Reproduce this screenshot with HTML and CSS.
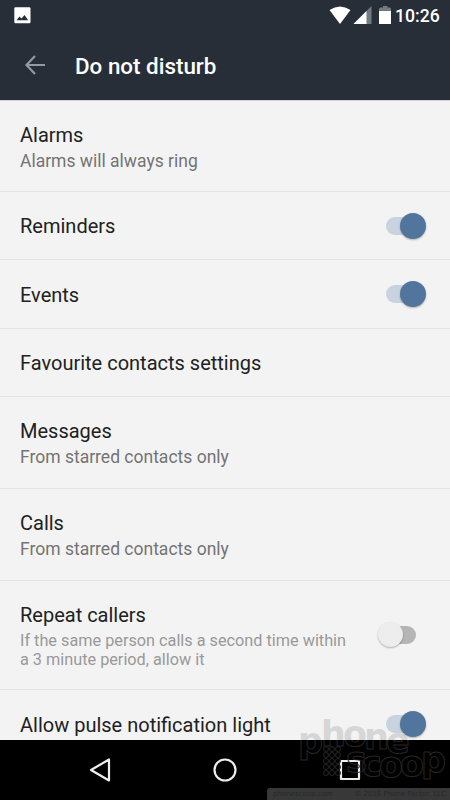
FILE: index.html
```html
<!DOCTYPE html>
<html lang="en">
<head>
<meta charset="utf-8">
<title>Do not disturb</title>
<link rel="stylesheet" href="styles.css">
</head>
<body>
<div class="screen">
  <header class="top">
    <div class="status">
      <svg class="photo" width="17" height="17" viewBox="0 0 17 17"><rect x=".3" y=".3" width="16.200" height="16" rx="1.200" fill="#fff"/><path d="M2.500 13.200 5.500 9.600 7.500 11.500 10.500 8 14.200 13.200Z" fill="#272e38"/></svg>
      <div class="status-right">
        <svg width="68" height="20" viewBox="0 0 68 20"><path d="M.5 5Q11 -2 21.500 5L11 19Z" fill="#fff"/><path d="M42.500 1V19H24.500Z" fill="#747a82"/><path d="M37.500 6V19H24.500Z" fill="#fff"/><path d="M50 4Q50 2.500 51.500 2.500H54V1H58.500V2.500H61Q62 2.500 62 4V7H50Z" fill="#747a82"/><path d="M50 6H62V19H50Z" fill="#fff"/></svg>
        <span class="clock">10:26</span>
      </div>
    </div>
    <div class="bar">
      <svg class="back" width="22" height="22" viewBox="0 0 22 22" fill="none" stroke="#9599a0" stroke-width="2.200"><path d="M21 11H3M11 2 2.500 11 11 20"/></svg>
      <h1>Do not disturb</h1>
    </div>
  </header>
  <main class="list">
    <div class="row tall"><div><div class="title">Alarms</div><div class="sub">Alarms will always ring</div></div></div>
    <div class="row"><div class="title">Reminders</div><span class="switch on"></span></div>
    <div class="row"><div class="title">Events</div><span class="switch on"></span></div>
    <div class="row"><div class="title">Favourite contacts settings</div></div>
    <div class="row tall"><div><div class="title">Messages</div><div class="sub">From starred contacts only</div></div></div>
    <div class="row tall"><div><div class="title">Calls</div><div class="sub">From starred contacts only</div></div></div>
    <div class="row repeat"><div><div class="title">Repeat callers</div><div class="note">If the same person calls a second time within<br>a 3 minute period, allow it</div></div><span class="switch off"></span></div>
    <div class="row last"><div class="title">Allow pulse notification light</div><span class="switch on"></span></div>
  </main>
  <nav class="nav">
    <svg width="450" height="60" viewBox="0 0 450 60" fill="none" stroke="#eee" stroke-width="2.200" stroke-linejoin="round"><path d="M91 30 109 19.500V40.500Z"/><circle cx="225" cy="30" r="10.500"/><rect x="341" y="21" width="18" height="18"/></svg>
  </nav>
  <svg class="mark" width="155" height="90" viewBox="0 0 155 90">
    <defs>
      <linearGradient id="fill" gradientUnits="userSpaceOnUse" x1="0" y1="0" x2="0" y2="60"><stop offset=".5" stop-color="#000" stop-opacity=".12"/><stop offset=".5" stop-color="#000" stop-opacity="0"/></linearGradient>
      <linearGradient id="line" gradientUnits="userSpaceOnUse" x1="0" y1="0" x2="0" y2="60"><stop offset=".5" stop-color="#000" stop-opacity="0"/><stop offset=".5" stop-color="#262626"/></linearGradient>
      <pattern id="dots" width="6" height="6" patternUnits="userSpaceOnUse" x="28" y="36"><circle cx="3" cy="3" r="2.500" fill="none" stroke="#242424"/></pattern>
    </defs>
    <rect x="28" y="36" width="18" height="30" fill="url(#dots)"/>
    <g class="brand" fill="url(#fill)" stroke="url(#line)"><text x="3 26 48 69 91" y="43 36 36 39 43">phone</text><text x="51 66 84 105 126" y="62 66 67 66 62">scoop</text></g>
  </svg>
  <div class="credit"><span>phonescoop.com</span><span>© 2016 Phone Factor, LLC</span></div>
</div>
</body>
</html>
```
FILE: styles.css
```css
* { box-sizing: border-box; }
body { margin: 0; font-family: Roboto, "Liberation Sans", sans-serif; }
.screen { position: relative; width: 450px; height: 800px; display: flex; flex-direction: column; overflow: hidden; background: #f3f3f3; }
.top { height: 100px; flex: none; background: #272e38; color: #fff; }
.status { height: 30px; display: flex; justify-content: space-between; padding: 0 10px 0 14px; }
.photo { margin-top: 7px; }
.status-right { display: flex; padding-top: 5px; }
.clock { font-size: 17.600px; line-height: 22px; font-weight: 500; width: 45px; white-space: nowrap; margin-left: -2px; }
.bar { height: 70px; display: flex; align-items: center; padding: 0 0 0 24px; }
h1 { margin: 2px 0 0 29px; font-size: 22.400px; line-height: 30px; font-weight: 500; }
.list { height: 640px; flex: none; overflow: hidden; border-top: 1px solid #d2d4d8; }
.row { height: 68.300px; display: flex; justify-content: space-between; align-items: center; padding: 1px 24px 0 20px; border-bottom: 1px solid #e3e3e3; }
.tall { height: 92px; padding-top: 2px; }
.row.tall:first-child { height: 91px; padding-top: 1px; }
.repeat { height: 109px; padding: 1px 33px 0 20px; }
.last { border: 0; padding-top: 1px; }
.title { font-size: 20px; line-height: 26px; color: #212121; white-space: nowrap; }
.row > .title { margin-top: .5px; }
.sub { font-size: 17.500px; line-height: 24px; margin-top: 1px; margin-bottom: -1px; color: #747474; white-space: nowrap; }
.note { font-size: 16.250px; line-height: 19px; margin-top: 3px; color: #999; white-space: nowrap; }
.switch { position: relative; width: 40px; height: 26px; flex: none; margin-top: -1px; }
.switch::before { content: ""; position: absolute; top: 4px; left: 0; width: 36px; height: 18px; border-radius: 9px; background: #c9d3e0; }
.switch::after { content: ""; position: absolute; top: 0; right: 0; width: 26px; height: 26px; border-radius: 50%; background: #52759e; box-shadow: 0 1px 2px rgba(0,0,0,.28); }
.off { margin-top: -1px; }
.off::before { background: #b5b5b5; left: 3px; }
.off::after { background: #ededed; right: 14px; width: 25px; height: 25px; }
.nav { height: 60px; flex: none; background: #000; }
.nav svg { display: block; }
.mark { position: absolute; left: 295px; top: 710px; }
.brand { font: bold 35px "DejaVu Sans", sans-serif; }
.credit { position: absolute; left: 267px; top: 788px; width: 183px; height: 12px; padding: 0 4px 0 6px; display: flex; justify-content: space-between; border-radius: 3px 0 0 0; background: #383838; color: #292929; font: 7px/12px "DejaVu Sans", sans-serif; white-space: nowrap; }
```
